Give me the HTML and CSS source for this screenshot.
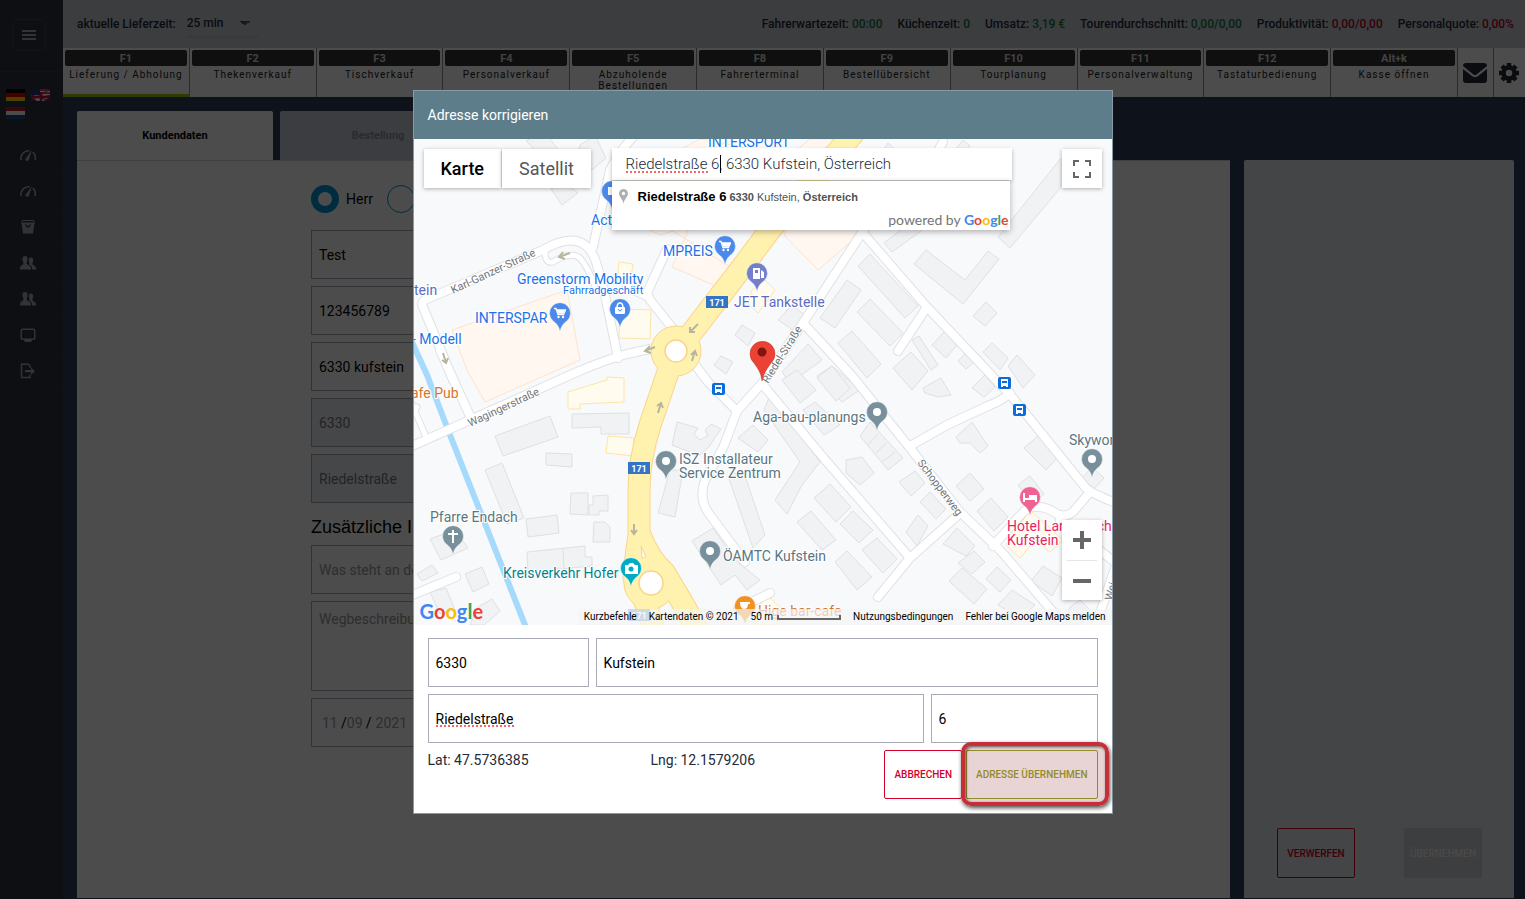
FILE: index.html
```html
<!DOCTYPE html>
<html lang="de">
<head>
    <meta charset="UTF-8">
    <meta name="viewport" content="width=device-width, initial-scale=1.0">
    <title>Adresse korrigieren</title>

    <link rel="stylesheet" href="styles.css">
</head>

<body>

    <svg class="defs" width="0" height="0" aria-hidden="true">
        <symbol id="gauge" viewBox="0 0 16 16">
            <path d="M1 13A7.500 8 0 0 1 9.500 3.800M12.800 5A8 8 0 0 1 15 13" fill="none" stroke="currentColor" stroke-width="1.600"/>
            <path d="M12 3L9 12.500A1.800 1.800 0 1 1 6.500 10.500Z" fill="currentColor"/>
        </symbol>
        <symbol id="users" viewBox="0 0 16 16">
            <path d="M5 1C7 1 7.800 2.500 7.500 5 7.300 6.500 6.600 7.500 6.600 8.500 6.600 10 11 10 11 13.500V14.500H0V13.500C0 10 3.500 10 3.500 8.500 3.500 7.500 2.700 6.500 2.500 5 2.300 2.500 3 1 5 1Z" fill="currentColor"/>
            <path d="M11 2.500C12.700 2.500 13.400 3.800 13.200 5.800 13 7.200 12.400 8 12.400 9 12.400 10.200 16 10.800 16 13.500V14.500H12.200C12.200 11.500 11 10.600 9.200 9.600 9.900 8.600 9 7.200 8.900 5.800 8.700 3.800 9.300 2.500 11 2.500Z" fill="currentColor"/>
        </symbol>
        <symbol id="cart" viewBox="0 0 12 12">
            <path d="M0 1.500H2L4 7.500H9.500L11.500 3H3" fill="none" stroke="#fff" stroke-width="1.300"/>
            <path d="M3 3H11L9.300 6.800H4.300Z" fill="#fff"/>
            <circle cx="4.500" cy="10" r="1.200" fill="#fff"/>
            <circle cx="9" cy="10" r="1.200" fill="#fff"/>
        </symbol>
    </svg>

    <div class="app">

        <nav class="sidebar">
            <div class="menu">
                <button type="button" class="menu-btn" aria-label="Menü">
                    <svg width="14" height="10" viewBox="0 0 14 10"><path d="M0 1H14M0 5H14M0 9H14" stroke="currentColor" stroke-width="2"/></svg>
                </button>
            </div>
            <div class="flags">
                <svg width="19" height="12" viewBox="0 0 19 12"><path d="M0 0H19V4H0Z" fill="#000"/><path d="M0 4H19V8H0Z" fill="#dd0000"/><path d="M0 8H19V12H0Z" fill="#ffce00"/></svg>
                <svg width="19" height="12" viewBox="0 0 19 12"><path d="M0 0H19V12H0Z" fill="#fff"/><path d="M0 0H9V6H0Z" fill="#27347d"/><path d="M9 1H19M9 4H19" stroke="#c8102e" stroke-width="1.500"/><path d="M0 12V8L6 12ZM19 12V8L13 12ZM19 6V7L14 6Z" fill="#27347d"/><path d="M0 6L19 12M19 0L0 12" stroke="#c8102e" stroke-width="1"/><path d="M10 3V12M0 8H19" stroke="#c8102e" stroke-width="2.500"/></svg>
                <svg width="19" height="12" viewBox="0 0 19 12"><path d="M0 0H19V4H0Z" fill="#ae1c28"/><path d="M0 4H19V8H0Z" fill="#fff"/><path d="M0 8H19V12H0Z" fill="#21468b"/></svg>
            </div>
            <a href="#" class="nav-item" aria-label="Dashboard"><svg width="16" height="16"><use href="#gauge"/></svg></a>
            <a href="#" class="nav-item" aria-label="Auswertung"><svg width="16" height="16"><use href="#gauge"/></svg></a>
            <a href="#" class="nav-item" aria-label="Bestellungen">
                <svg width="16" height="16" viewBox="0 0 16 16"><path d="M2.500 1.500H13.500L14.500 4H1.500Z" fill="none" stroke="currentColor"/><path d="M1.500 4H14.500L13 14.500H3Z" fill="currentColor"/><path d="M5.500 5.500Q8 10.500 10.500 5.500" fill="none" stroke="#2f333c" stroke-width="1.500"/></svg>
            </a>
            <a href="#" class="nav-item" aria-label="Kunden"><svg width="16" height="16"><use href="#users"/></svg></a>
            <a href="#" class="nav-item" aria-label="Personal"><svg width="16" height="16"><use href="#users"/></svg></a>
            <a href="#" class="nav-item" aria-label="Anzeige">
                <svg width="16" height="16" viewBox="0 0 16 16"><rect x="1.250" y="2.250" width="13.500" height="10" rx="1.500" fill="none" stroke="currentColor" stroke-width="1.500"/><path d="M4 13H12L11 15H5Z" fill="currentColor"/></svg>
            </a>
            <a href="#" class="nav-item" aria-label="Abmelden">
                <svg width="16" height="16" viewBox="0 0 16 16"><path d="M10 5V2.500L8.500 1.250H1.500V14.500H10V11.500" fill="none" stroke="currentColor" stroke-width="1.500"/><path d="M5 7H11V4.500L15 8.200 11 12V9.300H5Z" fill="currentColor"/></svg>
            </a>
        </nav>

        <div class="page">

            <header class="topbar">
                <div class="delivery">
                    <label for="lieferzeit">aktuelle Lieferzeit:</label>
                    <select id="lieferzeit">
                        <option>25 min</option>
                    </select>
                </div>
                <ul class="stats">
                    <li>Fahrerwartezeit: <span class="good">00:00</span></li>
                    <li>Küchenzeit: <span class="good">0</span></li>
                    <li>Umsatz: <span class="good">3,19 €</span></li>
                    <li>Tourendurchschnitt: <span class="good">0,00/0,00</span></li>
                    <li>Produktivität: <span class="bad">0,00/0,00</span></li>
                    <li>Personalquote: <span class="bad">0,00%</span></li>
                </ul>
            </header>

            <div class="fkeys">
                <a href="#" class="fkey active"><b>F1</b><span>Lieferung / Abholung</span></a>
                <a href="#" class="fkey"><b>F2</b><span>Thekenverkauf</span></a>
                <a href="#" class="fkey"><b>F3</b><span>Tischverkauf</span></a>
                <a href="#" class="fkey"><b>F4</b><span>Personalverkauf</span></a>
                <a href="#" class="fkey"><b>F5</b><span>Abzuholende Bestellungen</span></a>
                <a href="#" class="fkey"><b>F8</b><span>Fahrerterminal</span></a>
                <a href="#" class="fkey"><b>F9</b><span>Bestellübersicht</span></a>
                <a href="#" class="fkey"><b>F10</b><span>Tourplanung</span></a>
                <a href="#" class="fkey"><b>F11</b><span>Personalverwaltung</span></a>
                <a href="#" class="fkey"><b>F12</b><span>Tastaturbedienung</span></a>
                <a href="#" class="fkey"><b>Alt+k</b><span>Kasse öffnen</span></a>
                <button type="button" class="tool mail" aria-label="Nachrichten">
                    <svg width="24" height="20" viewBox="0 0 24 20"><path d="M3 0H21Q24 0 24 3L13.500 11.500Q12 12.500 10.500 11.500L0 3Q0 0 3 0Z" fill="currentColor"/><path d="M0 6L9.500 13.500Q12 15 14.500 13.500L24 6V17Q24 20 21 20H3Q0 20 0 17Z" fill="currentColor"/></svg>
                </button>
                <button type="button" class="tool gear" aria-label="Einstellungen">
                    <svg width="20" height="20" viewBox="0 0 20 20"><circle cx="10" cy="10" r="5.500" fill="none" stroke="currentColor" stroke-width="4.500"/><path d="M10 0V3M10 17V20M0 10H3M17 10H20M3 3L5 5M15 15L17 17M3 17L5 15M15 5L17 3" stroke="currentColor" stroke-width="4.500"/></svg>
                </button>
            </div>

            <main class="content">
                <section class="customer">
                    <div class="tabs">
                        <button type="button" class="tab current">Kundendaten</button>
                        <button type="button" class="tab">Bestellung</button>
                    </div>
                    <div class="panel">
                        <form class="customer-form">
                            <div class="radios">
                                <label><input type="radio" name="anrede" checked>Herr</label>
                                <label><input type="radio" name="anrede">Frau</label>
                            </div>
                            <input class="field" type="text" value="Test" aria-label="Name">
                            <input class="field" type="text" value="123456789" aria-label="Telefon">
                            <input class="field" type="text" value="6330 kufstein" aria-label="Suche">
                            <input class="field" type="text" value="6330" aria-label="PLZ" disabled>
                            <input class="field" type="text" value="Riedelstraße" aria-label="Straße" disabled>
                            <h2>Zusätzliche Informationen</h2>
                            <input class="field" type="text" placeholder="Was steht an der Klingel?" aria-label="Klingel">
                            <textarea class="field" placeholder="Wegbeschreibung" aria-label="Wegbeschreibung"></textarea>
                            <div class="field date">
                                <input type="text" placeholder="11" aria-label="Tag">/<input type="text" placeholder="09" aria-label="Monat">/<input class="year" type="text" placeholder="2021" aria-label="Jahr">
                            </div>
                        </form>
                    </div>
                </section>

                <aside class="summary">
                    <button type="button" class="discard">VERWERFEN</button>
                    <button type="button" class="submit" disabled>ÜBERNEHMEN</button>
                </aside>
            </main>
        </div>
    </div>

    <div class="backdrop">
        <div class="modal" role="dialog" aria-labelledby="modal-title">
            <h1 id="modal-title">Adresse korrigieren</h1>

            <div class="map">
                <svg class="map-canvas" viewBox="414 139 698 486" preserveAspectRatio="xMidYMid slice">
                    <defs>
                        <path id="pin" d="M0 18C-1 12-4 9-7 7A10.500 10.500 0 1 1 7 7C4 9 1 12 0 18Z"/>
                        <g id="roads">
                            <path d="M453 380L423 307Q420 302 427 299L543 250Q570 234 585 245 592 250 596 262L604 290 618 358"/>
                            <path d="M593 247L610 170Q620 150 634 136"/>
                            <path d="M440 350L470 416"/>
                            <path d="M410 447L470 420 577 372Q605 360 627 354L655 348"/>
                            <path d="M674 330L650 300 647 293 667 249M627 287L647 296"/>
                            <path d="M696 366L708 382 737 411"/>
                            <path d="M865 228L803 323 764 381 737 411 723 448 705 480Q698 500 710 515L730 542 745 562"/>
                            <path d="M803 323L853 377 910 448 960 512 1000 550 1060 620"/>
                            <path d="M763 385L827 462 910 558M957 516L910 558 878 597"/>
                            <path d="M910 446L947 425 990 405Q1003 400 1010 393"/>
                            <path d="M863 233L927 307 1013 398 1085 487Q1090 493 1116 503"/>
                            <path d="M927 307L898 351"/>
                            <path d="M1090 492L1073 512Q1065 518 1057 514 1045 505 1032 507 1025 508 1010 527L993 546"/>
                            <path d="M1060 520L1116 563M1096 625L1116 565"/>
                            <path d="M943 142L930 165"/>
                            <path d="M410 596L456 577"/>
                            <path d="M770 593L738 609"/>
                        </g>
                        <g id="lanes">
                            <path d="M545 252Q545 264 553 262L562 257Q574 253 580 258 590 270 596 290"/>
                            <path d="M412 404L426 437M412 415L417 407"/>
                        </g>
                        <g id="highway">
                            <path d="M858 128L770 230 740 270 690 335"/>
                            <path d="M668 372L650 425Q639 460 639 490V535Q636 555 634 578L646 604 654 630"/>
                            <path d="M640 535Q650 560 664 572L682 602 700 634"/>
                        </g>
                    </defs>

                    <rect x="414" y="139" width="698" height="486" fill="#f8f9fb"/>

                    <g class="shops">
                        <path d="M452 330L567 290 580 360 485 402 467 370Z"/>
                        <path d="M672 267L690 226 757 150 700 139 625 180 620 215 660 235 673 231 735 270 725 290Z"/>
                        <path d="M784 235L818 270 862 232 880 190 850 139 800 200Z"/>
                        <path d="M760 200L790 160 850 139H810L760 180Z"/>
                    </g>
                    <g class="shops yellow">
                        <path d="M568 392L607 380V377L624 378V402L580 404V409H568Z"/>
                        <path d="M608 436L634 438 633 456 606 453Z"/>
                        <path d="M620 309L651 310 650 339 619 338Z"/>
                        <path d="M619 262L633 264 630 285 617 280Z"/>
                        <path d="M752 290L765 280 775 290 758 313 748 303Z"/>
                        <path d="M1006 545L1030 510 1063 540 1050 552 1035 540 1020 558Z"/>
                        <path d="M760 605L768 596 785 612 775 625H755Z"/>
                    </g>

                    <g class="buildings">
                        <path d="M526 141L544 131 560 152 548 163Z"/>
                        <path d="M580 145L595 135 606 158 592 170 578 160Z"/>
                        <path d="M551 189L565 183 578 193 562 205Z"/>
                        <path d="M495 436L550 416 558 437 503 456Z"/>
                        <path d="M572 414L629 413V434H601V427L572 428Z"/>
                        <path d="M546 453L572 454V467L546 465Z"/>
                        <path d="M485 470L502 463 524 518 507 524Z"/>
                        <path d="M571 493H588V515L570 514Z"/>
                        <path d="M593 496L608 495V511H599V515H589V505H593Z"/>
                        <path d="M594 522H605L610 527V542H593Z"/>
                        <path d="M526 519L557 515 559 533 528 537Z"/>
                        <path d="M527 552L585 546V557H592V566L528 572ZM563 549L564 568"/>
                        <path d="M430 539L455 530 468 548 441 560Z"/>
                        <path d="M417 574L432 565 438 573 422 581Z"/>
                        <path d="M465 574L482 567 489 584 473 592Z"/>
                        <path d="M430 592L446 588 455 610 440 614Z"/>
                        <path d="M478 607L492 599 500 611 484 625H470Z"/>
                        <path d="M677 422L672 445 690 452 687 455H700L708 448 721 429 711 424 705 430 708 436 700 440 694 434 698 428Z"/>
                        <path d="M670 470H683L675 517 658 513Z"/>
                        <path d="M735 335L742 325 755 333 748 346Z"/>
                        <path d="M714 365L721 356 733 362 726 374Z"/>
                        <path d="M778 320L792 305 806 316 796 332Z"/>
                        <path d="M782 372L808 344 822 360 800 376 806 384 795 390Z"/>
                        <path d="M858 266L870 254 918 306 905 318Z"/>
                        <path d="M847 280L861 290 835 328 820 318Z"/>
                        <path d="M857 312L870 299 903 333 890 346Z"/>
                        <path d="M838 343L852 331 881 364 867 378Z"/>
                        <path d="M817 376L832 366 860 390 842 402Z"/>
                        <path d="M884 243L920 215 932 223 892 252Z"/>
                        <path d="M998 237L1061 158V187L1010 248Z"/>
                        <path d="M914 264L926 250 965 280 988 251 999 259 963 304Z"/>
                        <path d="M973 316L986 302 997 313 985 326Z"/>
                        <path d="M932 345L944 332 958 344 946 358Z"/>
                        <path d="M912 340L919 336 938 365 931 370Z"/>
                        <path d="M893 368L911 352 928 371 912 390Z"/>
                        <path d="M958 361L967 352 975 361 966 369Z"/>
                        <path d="M983 352L992 343 1008 358 1000 370Z"/>
                        <path d="M1008 366L1017 355 1035 375 1023 388Z"/>
                        <path d="M880 155L888 143 896 150 890 160Z"/>
                        <path d="M955 150L963 140 970 146 965 156Z"/>
                        <path d="M782 380L797 370 816 390 800 403Z"/>
                        <path d="M817 378L832 366 850 388 836 401Z"/>
                        <path d="M803 410L815 402 840 425 824 435Z"/>
                        <path d="M770 395L820 462 802 485 787 514 775 500 800 462 764 410Z"/>
                        <path d="M860 436L870 422 903 458 888 470ZM868 445L878 434M876 453L886 443M882 462L895 452"/>
                        <path d="M846 460L862 457 874 473 860 485 846 473Z"/>
                        <path d="M923 388L941 378 951 395 938 397 925 393Z"/>
                        <path d="M972 388L985 375 995 387 984 397Z"/>
                        <path d="M956 437L972 422 988 446 980 453 970 443 960 443Z"/>
                        <path d="M1024 448L1038 436 1058 457 1046 470Z"/>
                        <path d="M1082 478L1092 467 1104 478 1094 489Z"/>
                        <path d="M899 482L915 471 925 483 911 496Z"/>
                        <path d="M956 486L970 473 984 489 970 501Z"/>
                        <path d="M920 502L930 492 946 509 936 519Z"/>
                        <path d="M977 511L991 498 1008 517 994 531Z"/>
                        <path d="M1018 485L1030 476 1044 494 1033 504Z"/>
                        <path d="M906 532L918 515 928 526 917 546Z"/>
                        <path d="M814 498L830 484 851 507 836 522Z"/>
                        <path d="M797 522L811 511 836 540 822 550Z"/>
                        <path d="M840 524L853 511 873 530 859 543Z"/>
                        <path d="M862 550L877 538 897 559 883 573Z"/>
                        <path d="M835 562L847 551 872 577 857 590Z"/>
                        <path d="M943 544L957 528 975 546 966 556Z"/>
                        <path d="M958 563L974 551 985 562 972 574Z"/>
                        <path d="M949 581L962 568 987 589 974 604Z"/>
                        <path d="M986 579L997 567 1011 580 1000 592Z"/>
                        <path d="M998 605L1012 590 1035 605 1020 618Z"/>
                        <path d="M1031 581L1043 566 1062 578 1052 596Z"/>
                        <path d="M1070 607L1080 600 1090 610 1080 625H1065Z"/>
                        <path d="M692 541L713 528 735 560 760 580 747 590 735 575 721 585Z"/>
                        <path d="M728 476L743 470 765 535 753 548Z"/>
                        <path d="M738 438L753 425 768 440 758 452Z"/>
                    </g>

                    <path d="M411 340L427 375 450 435 527 630" class="river"/>

                    <use href="#lanes" class="casing thin"/>
                    <use href="#roads" class="casing"/>
                    <use href="#lanes" class="road thin"/>
                    <use href="#roads" class="road"/>

                    <use href="#highway" class="highway-casing"/>
                    <circle cx="676" cy="351" r="25" fill="#fff2af" stroke="#fbd488"/>
                    <circle cx="650" cy="583" r="26" fill="#fff2af" stroke="#fbd488"/>
                    <use href="#highway" class="highway"/>
                    <path d="M641 546L646 557 642 558Z" fill="#fff" stroke="#fbd488"/>
                    <circle cx="676" cy="351" r="11" fill="#fff" stroke="#fbd488" stroke-width="1.500"/>
                    <circle cx="651" cy="583" r="12" fill="#fff" stroke="#fbd488" stroke-width="1.500"/>

                    <g class="arrows">
                        <path d="M698 324L690 332M690 327V332H695"/>
                        <path d="M655 347L645 351M650 346L645 351 651 353"/>
                        <path d="M692 361L695 351M691 355L695 351 697 356"/>
                        <path d="M658 413L661 403M657 406L661 403 663 408"/>
                        <path d="M634 524V534M631 530L634 534 637 530"/>
                        <path d="M570 253L559 257M563 252L559 257 565 259"/>
                        <path d="M443 353L446 363M442 360L446 363 448 358"/>
                    </g>

                    <g class="shields">
                        <rect x="706" y="296" width="22" height="12"/>
                        <rect x="628" y="462" width="22" height="12"/>
                        <rect x="628" y="609" width="22" height="12" opacity=".7"/>
                        <text x="717" y="306">171</text>
                        <text x="639" y="472">171</text>
                        <text x="639" y="619">171</text>
                    </g>

                    <g class="streets">
                        <text transform="translate(453 294) rotate(-25)">Karl-Ganzer-Straße</text>
                        <text transform="translate(470 427) rotate(-25)">Wagingerstraße</text>
                        <text transform="translate(768 384) rotate(-58)">Riedel-Straße</text>
                        <text transform="translate(917 463) rotate(53)">Schopperweg</text>
                        <text transform="translate(1112 601) rotate(-75)">Wei</text>
                    </g>

                    <g class="pois">
                        <g class="blue">
                            <text x="708" y="147">INTERSPORT</text>
                            <text x="591" y="225">Act</text>
                            <text x="663" y="256">MPREIS</text>
                            <text x="517" y="284">Greenstorm Mobility</text>
                            <text x="563" y="294" class="small">Fahrradgeschäft</text>
                            <text x="475" y="323">INTERSPAR</text>
                            <text x="412" y="344">- Modell</text>
                        </g>
                        <g class="violet">
                            <text x="414" y="295">tein</text>
                            <text x="734" y="307">JET Tankstelle</text>
                        </g>
                        <g class="slate">
                            <text x="753" y="422">Aga-bau-planungs</text>
                            <text x="679" y="464">ISZ Installateur</text>
                            <text x="679" y="478">Service Zentrum</text>
                            <text x="430" y="522">Pfarre Endach</text>
                            <text x="723" y="561">ÖAMTC Kufstein</text>
                            <text x="1069" y="445">Skywork</text>
                        </g>
                        <text x="503" y="578" fill="#00838f">Kreisverkehr Hofer</text>
                        <g class="orange">
                            <text x="411" y="398">afe Pub</text>
                            <text x="758" y="616">Hige bar-cafe</text>
                        </g>
                        <g class="pink">
                            <text x="1007" y="531">Hotel Landküsche</text>
                            <text x="1007" y="545">Kufstein</text>
                        </g>
                    </g>

                    <g stroke="#fff" stroke-width=".5">
                        <use href="#pin" x="612" y="192" fill="#4b89ea"/>
                        <use href="#pin" x="725" y="247" fill="#4b89ea"/>
                        <use href="#pin" x="560" y="314" fill="#4b89ea"/>
                        <use href="#pin" x="620" y="310" fill="#4b89ea"/>
                        <use href="#pin" x="757" y="274" fill="#747fcb"/>
                        <use href="#pin" x="877" y="413" fill="#78909c"/>
                        <use href="#pin" x="666" y="462" fill="#78909c"/>
                        <use href="#pin" x="453" y="537" fill="#78909c"/>
                        <use href="#pin" x="710" y="552" fill="#78909c"/>
                        <use href="#pin" x="1092" y="460" fill="#78909c"/>
                        <use href="#pin" x="631" y="569" fill="#00acc1"/>
                        <use href="#pin" x="745" y="607" fill="#f19024"/>
                        <use href="#pin" x="1030" y="498" fill="#f06292"/>
                    </g>
                    <use href="#cart" x="719" y="240" width="12" height="12"/>
                    <use href="#cart" x="554" y="307" width="12" height="12"/>
                    <g fill="#fff">
                        <circle cx="877" cy="412" r="4"/>
                        <circle cx="666" cy="461" r="4"/>
                        <circle cx="710" cy="551" r="4"/>
                        <circle cx="1092" cy="459" r="4"/>
                        <rect x="608" y="187" width="6" height="8"/>
                        <rect x="615" y="307" width="10" height="7" rx="1"/>
                        <path d="M753 268H760V279H753ZM761 270L764 272V278H761Z"/>
                        <path d="M452 530H454V533H458V535H454V543H452V535H448V533H452Z"/>
                        <path d="M625 565H628L630 563H633L635 565H638V574H625Z"/>
                        <path d="M740 602H750V604H748Q748 609 744 609 740 609 740 602Z"/>
                        <path d="M1023 493H1025V498H1029V495H1037V502H1035V500H1025V502H1023Z"/>
                    </g>
                    <path d="M617 308Q617 303 620 303T623 308" fill="none" stroke="#fff" stroke-width="1.500"/>
                    <path d="M618 309Q620 313 622 309" fill="none" stroke="#4b89ea"/>
                    <circle cx="631" cy="569" r="2.500" fill="#00acc1"/>
                    <path d="M755 270H758V273H755Z" fill="#747fcb"/>

                    <g class="stops">
                        <rect x="712" y="383" width="13" height="12" rx="2"/>
                        <rect x="998" y="377" width="13" height="12" rx="2"/>
                        <rect x="1013" y="404" width="13" height="12" rx="2"/>
                        <path d="M715 385H722V393H720V392H717V393H715ZM1001 379H1008V387H1006V386H1003V387H1001ZM1016 406H1023V414H1021V413H1018V414H1016Z"/>
                        <path class="pane" d="M716 387H721V389H716ZM1002 381H1007V383H1002ZM1017 408H1022V410H1017Z"/>
                    </g>

                    <path d="M762 381C761 372 758 369 754 363A12.500 12.500 0 1 1 771 363C767 369 764 372 762 381Z" fill="#ea4335" stroke="#c5352b" stroke-width=".5"/>
                    <circle cx="762" cy="352" r="4.500" fill="#811411"/>
                </svg>

                <div class="map-type">
                    <button type="button" class="selected">Karte</button>
                    <button type="button">Satellit</button>
                </div>

                <div class="search">
                    <input type="text" value="Riedelstraße 6, 6330 Kufstein, Österreich" aria-label="Adresse suchen" spellcheck="false">
                    <i class="squiggle"></i>
                    <i class="caret"></i>
                    <div class="suggestions">
                        <a href="#" class="suggestion">
                            <svg width="9" height="15" viewBox="0 0 9 15"><path d="M4.500 15C4 10 0 8 0 4.500A4.500 4.500 0 0 1 9 4.500C9 8 5 10 4.500 15ZM4.500 2.800A1.700 1.700 0 1 0 4.510 2.800Z" fill="#b0b0b0" fill-rule="evenodd"/></svg>
                            <span><strong>Riedelstraße 6</strong> <b>6330</b> Kufstein, <b>Österreich</b></span>
                        </a>
                        <p class="powered">powered by <span class="google"><i>G</i><i>o</i><i>o</i><i>g</i><i>l</i><i>e</i></span></p>
                    </div>
                </div>

                <button type="button" class="fullscreen" aria-label="Vollbild">
                    <svg width="18" height="18" viewBox="0 0 18 18"><path d="M1 6V1H6M12 1H17V6M17 12V17H12M6 17H1V12" fill="none" stroke="#666" stroke-width="2"/></svg>
                </button>

                <div class="zoom">
                    <button type="button" aria-label="Vergrößern"><svg width="18" height="18" viewBox="0 0 18 18"><path d="M0 9H18M9 0V18" stroke="#666" stroke-width="4"/></svg></button>
                    <button type="button" aria-label="Verkleinern"><svg width="18" height="18" viewBox="0 0 18 18"><path d="M0 9H18" stroke="#666" stroke-width="4"/></svg></button>
                </div>

                <span class="google logo"><i>G</i><i>o</i><i>o</i><i>g</i><i>l</i><i>e</i></span>

                <div class="credits">
                    <a href="#">Kurzbefehle</a>
                    <span>Kartendaten © 2021</span>
                    <span class="scale">50 m <i></i></span>
                    <a href="#">Nutzungsbedingungen</a>
                    <a href="#">Fehler bei Google Maps melden</a>
                </div>
            </div>

            <form class="address-form">
                <div class="row city">
                    <input class="field" type="text" value="6330" aria-label="PLZ">
                    <input class="field" type="text" value="Kufstein" aria-label="Ort">
                </div>
                <div class="row street">
                    <div class="street-name">
                        <input class="field" type="text" value="Riedelstraße" aria-label="Straße" spellcheck="false">
                        <i class="squiggle"></i>
                    </div>
                    <input class="field" type="text" value="6" aria-label="Hausnummer">
                </div>
                <div class="row foot">
                    <span>Lat: 47.5736385</span>
                    <span>Lng: 12.1579206</span>
                    <div class="actions">
                        <button type="button" class="cancel">ABBRECHEN</button>
                        <div class="highlight">
                            <button type="button" class="accept">ADRESSE ÜBERNEHMEN</button>
                        </div>
                    </div>
                </div>
            </form>
        </div>
    </div>

</body>
</html>
```
FILE: styles.css
```css
*{
    box-sizing: border-box;
    margin: 0;
    padding: 0;
}
body{
    font-family: Roboto, "Liberation Sans", sans-serif;
    font-size: 14px;
    color: #222b38;
    background: #2f3c57;
}
button, input, select, textarea{
    font: inherit;
    color: inherit;
    outline: none;
}
button{
    cursor: pointer;
}
a{
    color: inherit;
    text-decoration: none;
}
.defs{
    position: absolute;
}

.app{
    display: flex;
    min-height: 100vh;
}

/* sidebar */
.sidebar{
    width: 63px;
    flex-shrink: 0;
    background: #2f333c;
    color: #a9abae;
}
.menu{
    height: 72px;
    padding: 19px 12px;
    border-bottom: 1px solid #3a3e48;
}
.menu-btn{
    width: 34px;
    height: 32px;
    background: none;
    border: 1px solid #3f434d;
    border-radius: 3px;
}
.flags{
    display: flex;
    flex-wrap: wrap;
    gap: 6px;
    padding: 17px 6px 18px;
}
.nav-item{
    display: flex;
    align-items: center;
    height: 36px;
    padding-left: 20px;
    border-bottom: 1px solid #373b45;
}

.page{
    flex: 1;
    min-width: 0;
    display: flex;
    flex-direction: column;
}

/* top bar */
.topbar{
    display: flex;
    justify-content: space-between;
    align-items: center;
    height: 48px;
    padding: 0 11px 0 14px;
    background: #c8ccd2;
    font-size: 12px;
    font-weight: 500;
}
.delivery{
    display: flex;
    align-items: center;
    gap: 11px;
}
.delivery select{
    width: 72px;
    height: 28px;
    appearance: none;
    border: none;
    border-bottom: 2px solid #bcc0c6;
    background: linear-gradient(to bottom right, #555 50%, transparent 50%) 58px 11px / 5px 5px no-repeat,
        linear-gradient(to bottom left, #555 50%, transparent 50%) 53px 11px / 5px 5px no-repeat;
}
.stats{
    display: flex;
    gap: 15px;
    list-style: none;
    color: #222b38;
}
.good{
    color: #0b7a3b;
}
.bad{
    color: #b8001f;
}

/* function keys */
.fkeys{
    display: flex;
    height: 49px;
    background: #fff;
}
.fkey{
    flex: 1;
    min-width: 0;
    overflow: hidden;
    padding: 2px 2px 0;
    border-right: 1px solid #8e929a;
    text-align: center;
    font-size: 10px;
    line-height: 11px;
    letter-spacing: 1px;
    color: #222;
}
.fkey b{
    display: block;
    height: 16px;
    line-height: 17px;
    margin-bottom: 3px;
    border-radius: 2px;
    background: #333;
    color: #ddd;
    letter-spacing: 0;
    font-size: 11px;
}
.fkey span{
    display: block;
}
.fkey.active{
    border-bottom: 3px solid #a5c400;
}
.tool{
    width: 36px;
    border: none;
    border-right: 1px solid #8e929a;
    background: none;
}
.tool.gear{
    width: 31px;
    border: none;
}
.tool svg{
    vertical-align: middle;
}

/* content */
.content{
    flex: 1;
    display: flex;
    gap: 14px;
    padding: 14px 11px 1px 14px;
}
.customer{
    flex: 1;
    display: flex;
    flex-direction: column;
}
.tabs{
    display: flex;
    gap: 7px;
}
.tab{
    width: 196px;
    height: 49px;
    border: none;
    border-radius: 2px 2px 0 0;
    background: #c8ced8;
    color: #8c9098;
    font-size: 11px;
    font-weight: 700;
}
.tab.current{
    background: #fff;
    color: #000;
}
.panel{
    flex: 1;
    border-top: 1px solid #d0d3d8;
    background: #fff;
}
.customer-form{
    display: flex;
    flex-direction: column;
    gap: 7px;
    width: 685px;
    max-width: 100%;
    margin: 0 auto;
    padding-top: 24px;
    color: #000;
}
.radios{
    display: flex;
    gap: 14px;
    margin-bottom: 10px;
}
.radios label{
    display: flex;
    align-items: center;
    gap: 7px;
}
.radios input{
    width: 28px;
    height: 28px;
    appearance: none;
    border: 1px solid #0094d2;
    border-radius: 50%;
}
.radios input:checked{
    border: 7px solid #0094d2;
}
.field{
    display: block;
    width: 100%;
    height: 49px;
    padding: 0 7px;
    border: 1px solid #a9acb6;
    background: #fff;
    color: #000;
}
.customer-form .field:disabled{
    background: #eceff3;
    color: #777;
}
.field::placeholder, .date input::placeholder{
    color: #999;
    opacity: 1;
}
.customer-form h2{
    margin: 7px 0 0;
    font: 18px/21px "Liberation Sans", Arial, sans-serif;
}
textarea.field{
    height: 90px;
    padding-top: 9px;
    resize: none;
}
.date{
    display: flex;
    align-items: center;
    padding-left: 10px;
}
.date input{
    width: 17px;
    margin-right: 2px;
    border: none;
    background: none;
}
.date .year{
    width: 40px;
    margin-left: 4px;
}

.summary{
    width: 270px;
    display: flex;
    justify-content: space-between;
    align-items: flex-end;
    padding: 0 32px 20px 33px;
    margin-top: 49px;
    background: #e3e6e9;
    border-radius: 2px 2px 0 0;
}
.summary button{
    width: 78px;
    height: 50px;
    border-radius: 2px;
    font-size: 10px;
    font-weight: 500;
}
.discard{
    border: 1px solid #d3002b;
    background: none;
    color: #d3002b;
}
.submit{
    border: none;
    background: #cdcfd2;
    color: #f5f5f5;
}

/* modal */
.backdrop{
    position: fixed;
    inset: 0;
    display: flex;
    justify-content: center;
    align-items: flex-start;
    padding-top: 90px;
    background: rgba(0, 0, 0, 0.7);
}
.modal{
    width: 700px;
    border: 1px solid #8a99a6;
    background: #fff;
}
.modal h1{
    height: 48px;
    padding-left: 14px;
    background: #5e7d8a;
    color: #fff;
    font-size: 14px;
    font-weight: 400;
    line-height: 48px;
}
.map{
    position: relative;
    height: 486px;
    overflow: hidden;
}
.map-canvas{
    display: block;
    width: 100%;
    height: 100%;
}

.buildings path{
    fill: #f1f2f4;
    stroke: #dfe0e3;
}
.shops path{
    fill: #fff7f0;
    stroke: #fde3cd;
}
.shops.yellow path{
    fill: #fffbee;
    stroke: #fde5a5;
}
.river{
    fill: none;
    stroke: #a6dafc;
    stroke-width: 6;
}
.casing, .road, .highway-casing, .highway{
    fill: none;
    stroke-linecap: round;
    stroke-linejoin: round;
}
.casing{
    stroke: #dfe1e5;
    stroke-width: 10;
}
.road{
    stroke: #fff;
    stroke-width: 8;
}
.casing.thin{
    stroke-width: 7;
}
.road.thin{
    stroke-width: 5;
}
.highway-casing{
    stroke: #fbd488;
    stroke-width: 23;
}
.highway{
    stroke: #fff2af;
    stroke-width: 21;
}
.arrows{
    fill: none;
    stroke: #b9b59c;
    stroke-width: 2;
}
.shields rect{
    fill: #3474c4;
}
.shields text{
    fill: #fff;
    font-size: 9px;
    font-weight: 700;
    text-anchor: middle;
}
.streets text, .pois text{
    paint-order: stroke;
    stroke: #fff;
    stroke-width: 2px;
}
.streets text{
    fill: #70757a;
    font-size: 11px;
}
.pois{
    font-size: 14px;
}
.pois .small{
    font-size: 11px;
}
.blue{
    fill: #1a73e8;
}
.violet{
    fill: #5c6bc0;
}
.slate{
    fill: #5a7681;
}
.orange{
    fill: #d7742a;
}
.pink{
    fill: #e91e63;
}
.stops rect, .stops .pane{
    fill: #0b6ddb;
}
.stops path{
    fill: #fff;
}

/* map controls */
.map-type{
    position: absolute;
    top: 10px;
    left: 10px;
    display: flex;
    gap: 1px;
}
.map-type button, .fullscreen, .zoom{
    border: none;
    background: #fff;
    box-shadow: 0 1px 4px rgba(0, 0, 0, 0.3);
}
.map-type button{
    height: 39px;
    padding: 0 17px;
    color: #565656;
    font-size: 18px;
}
.map-type .selected{
    color: #000;
    font-weight: 500;
}
.fullscreen{
    position: absolute;
    top: 10px;
    right: 10px;
    width: 40px;
    height: 39px;
}
.fullscreen svg, .zoom svg{
    display: block;
    margin: 0 auto;
}
.zoom{
    position: absolute;
    right: 10px;
    bottom: 25px;
    width: 40px;
    padding: 0 5px;
}
.zoom button{
    display: block;
    width: 100%;
    height: 40px;
    border: none;
    background: none;
}
.zoom button + button{
    border-top: 1px solid #e6e6e6;
}

.search{
    position: absolute;
    top: 9px;
    left: 198px;
    width: 400px;
}
.search input{
    display: block;
    width: 100%;
    height: 32px;
    padding: 0 14px;
    border: none;
    background: #fff;
    box-shadow: 0 2px 4px rgba(0, 0, 0, 0.3);
    font-size: 15px;
    font-weight: 300;
}
.squiggle{
    position: absolute;
    border-bottom: 2px dotted #f06a6a;
}
.search .squiggle{
    top: 23px;
    left: 14px;
    width: 82px;
}
.caret{
    position: absolute;
    top: 7px;
    left: 108px;
    width: 1px;
    height: 18px;
    background: #000;
}
.suggestions{
    width: 398px;
    height: 49px;
    margin-top: 1px;
    background: #fff;
    box-shadow: 0 2px 6px rgba(0, 0, 0, 0.3);
    font-family: "Liberation Sans", Arial, sans-serif;
    font-size: 11px;
    color: #515151;
}
.suggestion{
    display: flex;
    align-items: center;
    gap: 10px;
    height: 30px;
    padding-left: 7px;
}
.suggestion strong{
    color: #000;
    font-size: 13px;
}
.powered{
    padding-right: 1px;
    color: #757575;
    font-family: Lato, sans-serif;
    font-size: 14px;
    line-height: 17px;
    text-align: right;
}
.google{
    font-family: Lato, sans-serif;
    font-weight: 700;
}
.google i{
    color: #4285f4;
    font-style: normal;
}
.google i:nth-child(2), .google i:nth-child(6){
    color: #ea4335;
}
.google i:nth-child(3){
    color: #fbbc05;
}
.google i:nth-child(5){
    color: #34a853;
}
.google.logo{
    position: absolute;
    left: 6px;
    bottom: 0;
    font-size: 20px;
    line-height: 28px;
}

.credits{
    position: absolute;
    right: 0;
    bottom: 0;
    display: flex;
    height: 16px;
    background: rgba(245, 245, 245, 0.7);
    color: #000;
    font-size: 10px;
    line-height: 15px;
}
.credits > *{
    padding: 0 6px;
}
.scale{
    display: flex;
    gap: 4px;
}
.scale i{
    width: 64px;
    height: 5px;
    margin-top: 6px;
    border: 2px solid #666;
    border-top: none;
}

/* address form */
.address-form{
    display: grid;
    gap: 7px;
    padding: 13px 14px 14px;
}
.row{
    display: grid;
    gap: 7px;
}
.row.city{
    grid-template-columns: 161px 1fr;
}
.row.street{
    grid-template-columns: 1fr 167px;
}
.street-name{
    position: relative;
}
.street-name .squiggle{
    left: 8px;
    bottom: 16px;
    width: 78px;
}
.row.foot{
    grid-template-columns: 216px 1fr auto;
    line-height: 21px;
}
.actions{
    display: flex;
    gap: 4px;
}
.actions button{
    height: 49px;
    padding: 0 9px;
    border: 1px solid #d3002b;
    border-radius: 2px;
    background: none;
    color: #d3002b;
    font-size: 10px;
    font-weight: 500;
}
.actions .accept{
    border-color: #94a528;
    color: #94a528;
}
.highlight{
    position: relative;
}
.highlight::after{
    content: "";
    position: absolute;
    inset: -8px -11px -7px -5px;
    border: 4px solid #c62f37;
    border-radius: 10px;
    background: rgba(140, 40, 40, 0.2);
    box-shadow: 1px 2px 4px rgba(0, 0, 0, 0.7), inset 1px 1px 3px rgba(0, 0, 0, 0.6);
    pointer-events: none;
}
```
